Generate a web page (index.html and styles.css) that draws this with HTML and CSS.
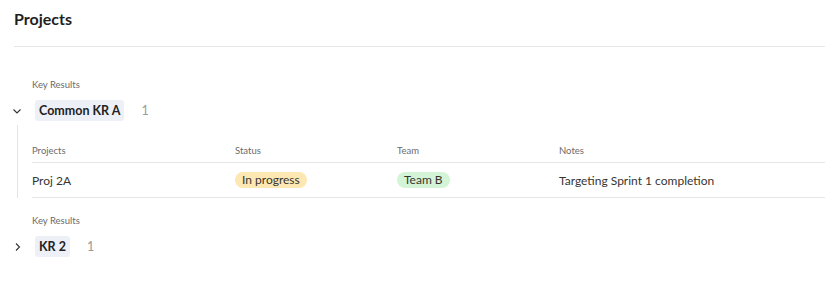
FILE: index.html
```html
<!DOCTYPE html>
<html>
<head>
<meta charset="utf-8">
<link rel="stylesheet" href="styles.css">
</head>
<body>
<div class="page">
  <h1 class="title">Projects</h1>
  <div class="divider"></div>

  <section class="group">
    <div class="group-label">Key Results</div>
    <div class="group-head">
      <span class="chev"><svg width="10" height="10" viewBox="0 0 10 10"><path d="M0.5 3.5 L4 7 L7.5 3.5" fill="none" stroke="#333" stroke-width="1.1"/></svg></span>
      <span class="kr">Common KR A</span>
      <span class="count">1</span>
    </div>
    <div class="group-body">
      <div class="table">
        <div class="row head">
          <div class="cell c1">Projects</div>
          <div class="cell c2">Status</div>
          <div class="cell c3">Team</div>
          <div class="cell c4">Notes</div>
        </div>
        <div class="row">
          <div class="cell c1">Proj 2A</div>
          <div class="cell c2"><span class="pill yellow">In progress</span></div>
          <div class="cell c3"><span class="pill green">Team B</span></div>
          <div class="cell c4">Targeting Sprint 1 completion</div>
        </div>
      </div>
    </div>
  </section>

  <section class="group second">
    <div class="group-label">Key Results</div>
    <div class="group-head">
      <span class="chev"><svg width="10" height="10" viewBox="0 0 10 10"><path d="M3 1.5 L6.5 5 L3 8.5" fill="none" stroke="#333" stroke-width="1.1"/></svg></span>
      <span class="kr">KR 2</span>
      <span class="count">1</span>
    </div>
  </section>
</div>
</body>
</html>
```
FILE: styles.css
```css
html, body {
  margin: 0;
  padding: 0;
  background: #fff;
}
body {
  font-family: "Lato", "Open Sans", sans-serif;
  color: #37352f;
}
.page {
  padding: 9px 0 0 14px;
}
.title {
  margin: 0;
  font-size: 16px;
  font-weight: 700;
  line-height: 20px;
  color: #1f1f1f;
}
.divider {
  margin-top: 17px;
  height: 1px;
  background: #e6e6e6;
}
.group {
  margin-top: 31px;
}
.group.second {
  margin-top: 16px;
}
.group-label {
  padding-left: 18px;
  font-size: 9.5px;
  line-height: 14px;
  color: #6b6b6b;
}
.group-head {
  display: flex;
  align-items: center;
  margin-top: 8px;
  height: 21px;
}
.chev {
  width: 21px;
  display: flex;
  align-items: center;
  justify-content: flex-start;
  margin-left: -1px;
  margin-right: 1px;
}
.kr {
  background: #eef0f7;
  border-radius: 3px;
  padding: 0 4px;
  height: 21px;
  line-height: 21px;
  font-size: 12.5px;
  font-weight: 700;
  color: #222;
}
.count {
  margin-left: 17px;
  font-size: 12.5px;
  color: #9a9a9a;
}
.group-body {
  margin-left: 3px;
  margin-top: 4px;
  border-left: 1px solid #e4e4e4;
  padding: 14px 0 0 14px;
}
.table {
  display: flex;
  flex-direction: column;
}
.row {
  display: flex;
  border-bottom: 1px solid #e6e6e6;
}
.row.head {
  height: 23px;
  align-items: center;
  font-size: 9.5px;
  color: #6b6b6b;
}
.row:not(.head) {
  height: 34px;
  align-items: center;
  font-size: 12px;
  color: #37352f;
}
.c1 { width: 203px; }
.c2 { width: 162px; }
.c3 { width: 162px; }
.c4 { flex: 1; }
.pill {
  display: inline-block;
  height: 16px;
  line-height: 16px;
  border-radius: 8px;
  padding: 0 7px;
}
.yellow { background: #fde8b4; }
.green { background: #d3f4d6; }
```
